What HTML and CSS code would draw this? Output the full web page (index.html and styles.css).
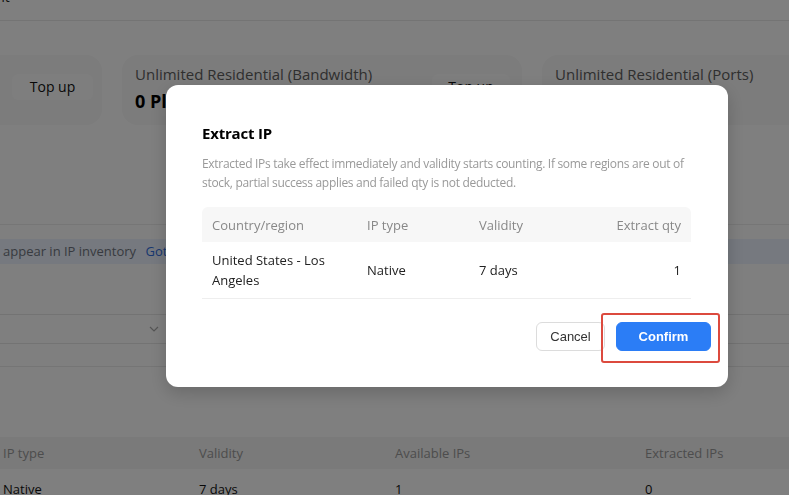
FILE: index.html
```html
<!DOCTYPE html>
<html lang="en">
    <head>
        <meta charset="utf-8"/>
        <title>IP inventory</title>
        <link rel="stylesheet" href="styles.css">
    </head>
    <body>
        <div class="page">
            <div class="topbar"><span class="crumb">Account</span></div>

            <div class="cards">
                <div class="card card-first">
                    <a class="ghost">Top up</a>
                </div>
                <div class="card">
                    <div class="card-info">
                        <div class="card-title">Unlimited Residential (Bandwidth)</div>
                        <div class="card-value">0 Plans</div>
                    </div>
                    <a class="ghost">Top up</a>
                </div>
                <div class="card">
                    <div class="card-info">
                        <div class="card-title">Unlimited Residential (Ports)</div>
                        <div class="card-value">0 Plans</div>
                    </div>
                    <a class="ghost">Top up</a>
                </div>
            </div>

            <div class="tabs"></div>

            <div class="notice">appear in IP inventory <a>Got it</a></div>

            <div class="filter">
                <div class="select">
                    <svg width="12" height="12" viewBox="0 0 12 12"><path d="M2 4l4 4 4-4" fill="none" stroke="#aaa" stroke-width="1.2"/></svg>
                </div>
            </div>
            <div class="filter-line"></div>

            <table class="inventory">
                <tr><th>IP type</th><th>Validity</th><th>Available IPs</th><th>Extracted IPs</th></tr>
                <tr><td>Native</td><td>7 days</td><td>1</td><td>0</td></tr>
            </table>
        </div>

        <div class="mask">
            <div class="dialog">
                <h3>Extract IP</h3>
                <p class="desc">Extracted IPs take effect immediately and validity starts counting. If some regions are out of stock, partial success applies and failed qty is not deducted.</p>
                <table class="summary">
                    <tr>
                        <th class="col-country">Country/region</th>
                        <th class="col-type">IP type</th>
                        <th class="col-valid">Validity</th>
                        <th class="num">Extract qty</th>
                    </tr>
                    <tr>
                        <td>United States - Los Angeles</td>
                        <td>Native</td>
                        <td>7 days</td>
                        <td class="num">1</td>
                    </tr>
                </table>
                <div class="footer">
                    <a class="btn btn-cancel">Cancel</a>
                    <a class="btn btn-confirm">Confirm<span class="mark"></span></a>
                </div>
            </div>
        </div>
    </body>
</html>
```

FILE: styles.css
```css
html, body {
    margin: 0;
    height: 100%;
    overflow: hidden;
}

body {
    background: #fff;
    font-family: "Open Sans", "Noto Sans", sans-serif;
    color: #222;
}

a {
    cursor: pointer;
}

.topbar {
    height: 20px;
    border-bottom: 1px solid #e8e8e8;
}

.crumb {
    display: inline-block;
    margin: -13px 0 0 -43px;
    font-size: 14px;
    vertical-align: top;
}

.cards {
    display: flex;
    gap: 20px;
    margin: 34px 0 0 -20px;
}

.card {
    flex: 0 0 400px;
    box-sizing: border-box;
    height: 70px;
    padding: 9px 12px 0 13px;
    border-radius: 16px;
    background: #f8f8f8;
    display: flex;
    justify-content: space-between;
}

.card-first {
    flex-basis: 122px;
    padding: 9px 9px 0 32px;
}

.card-title {
    font-size: 15px;
    color: #5e5e5e;
    line-height: 20px;
}

.card-value {
    margin-top: 5px;
    font-size: 18px;
    font-weight: 700;
    color: #000;
}

.ghost {
    display: block;
    flex: 0 0 auto;
    box-sizing: border-box;
    width: 78px;
    height: 26px;
    margin-top: 10px;
    border-radius: 6px;
    background: #fdfdfd;
    text-align: center;
    line-height: 26px;
    font-size: 14px;
    color: #111;
}

.card-first .ghost {
    width: 81px;
}

.tabs {
    height: 99px;
    border-bottom: 1px solid #ededed;
}

.notice {
    margin-top: 14px;
    height: 25px;
    line-height: 25px;
    padding-left: 3px;
    background: #ecf3ff;
    font-size: 13px;
    color: #70757e;
    white-space: nowrap;
}

.notice a {
    margin-left: 6px;
    color: #2f6fe0;
}

.filter {
    margin-top: 50px;
    height: 28px;
    border-top: 1px solid #e6e6e6;
    border-bottom: 1px solid #e6e6e6;
}

.select {
    width: 160px;
    height: 28px;
    display: flex;
    align-items: center;
    justify-content: flex-end;
}

.filter-line {
    height: 22px;
    border-bottom: 1px solid #eaeaea;
}

.inventory {
    margin-top: 70px;
    width: 820px;
    border-collapse: collapse;
    font-size: 13px;
}

.inventory th {
    height: 32px;
    padding: 0 0 0 3px;
    background: #f4f4f4;
    text-align: left;
    font-weight: 400;
    color: #9a9a9a;
}

.inventory th:nth-child(1), .inventory td:nth-child(1) { width: 193px; }
.inventory th:nth-child(2), .inventory td:nth-child(2) { width: 193px; }
.inventory th:nth-child(3), .inventory td:nth-child(3) { width: 247px; }

.inventory td {
    height: 40px;
    padding: 0 0 0 3px;
    color: #111;
}

.mask {
    position: fixed;
    inset: 0;
    background: rgba(0, 0, 0, 0.5);
    padding: 85px 0 0 166px;
}

.dialog {
    width: 562px;
    box-sizing: border-box;
    padding: 36px 37px 36px 36px;
    border-radius: 12px;
    background: #fff;
    box-shadow: 0 6px 18px rgba(0, 0, 0, 0.18);
}

.dialog h3 {
    margin: 0;
    font-size: 15px;
    line-height: 24px;
    font-weight: 700;
    letter-spacing: -0.2px;
    color: #000;
}

.desc {
    margin: 9px 0 0;
    font-size: 12px;
    line-height: 19px;
    letter-spacing: -0.3px;
    color: #999;
}

.summary {
    margin-top: 15px;
    width: 100%;
    border-collapse: separate;
    border-spacing: 0;
    font-size: 13px;
}

.summary th {
    height: 35px;
    padding: 0 10px;
    background: #f7f7f7;
    text-align: left;
    font-weight: 400;
    color: #888;
}

.summary th:first-child { border-top-left-radius: 6px; }
.summary th:last-child { border-top-right-radius: 6px; }

.summary td {
    height: 56px;
    padding: 0 10px;
    border-bottom: 1px solid #eee;
    line-height: 20px;
    color: #222;
}

.summary .col-country { width: 135px; }
.summary .col-type { width: 92px; }
.summary .col-valid { width: 100px; }

.summary .num {
    text-align: right;
}

.footer {
    margin: 23px -20px 0 0;
    display: flex;
    justify-content: flex-end;
    gap: 11px;
}

.btn {
    position: relative;
    display: inline-block;
    box-sizing: border-box;
    height: 29px;
    line-height: 27px;
    border-radius: 6px;
    border: 1px solid #dcdcdc;
    text-align: center;
    font-family: "Liberation Sans", Arial, sans-serif;
    font-size: 13px;
    color: #333;
    user-select: none;
}

.btn-cancel {
    width: 69px;
}

.btn-confirm {
    width: 95px;
    background: #2b7df6;
    border-color: #2b7df6;
    color: #fff;
    font-weight: 700;
}

.mark {
    position: absolute;
    left: -16px;
    right: -10px;
    top: -10px;
    bottom: -13px;
    border: 2px solid #dc4a3e;
    border-radius: 3px;
}
```
